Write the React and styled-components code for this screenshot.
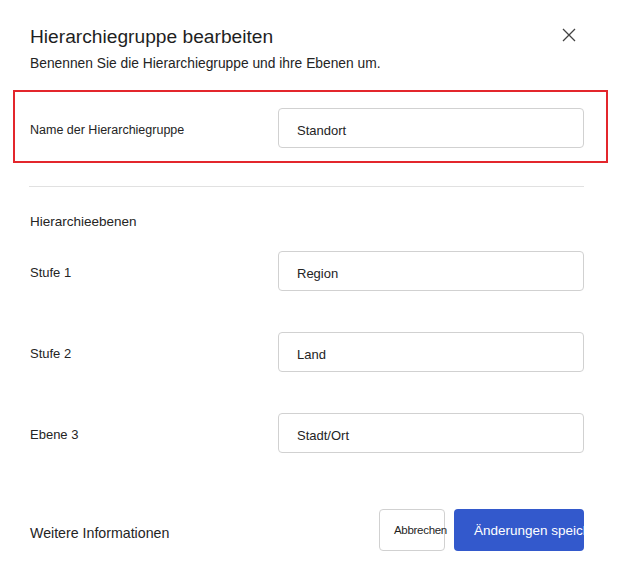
import React from "react";
import styled, { createGlobalStyle } from "styled-components";

const GlobalStyle = createGlobalStyle`
  body {
    margin: 0;
    background: #ffffff;
    font-family: "Liberation Sans", Arial, sans-serif;
    color: #242424;
  }
`;

const levels = [
  { label: "Stufe 1", value: "Region" },
  { label: "Stufe 2", value: "Land" },
  { label: "Ebene 3", value: "Stadt/Ort" },
];

const App = () => {
  return (
    <>
      <GlobalStyle />
      <Dialog>
        <Header>
          <Title>Hierarchiegruppe bearbeiten</Title>
          <CloseButton aria-label="Schließen">
            <svg width="14" height="14" viewBox="0 0 14 14">
              <path d="M1 1L13 13M13 1L1 13" stroke="#424242" strokeWidth="1.3" fill="none" />
            </svg>
          </CloseButton>
        </Header>
        <Subtitle>Benennen Sie die Hierarchiegruppe und ihre Ebenen um.</Subtitle>

        <Highlight>
          <FieldRow>
            <Label $size="12.5px">Name der Hierarchiegruppe</Label>
            <TextField defaultValue="Standort" />
          </FieldRow>
        </Highlight>

        <Divider />

        <SectionLabel>Hierarchieebenen</SectionLabel>

        <Levels>
          {levels.map((level) => (
            <FieldRow key={level.label}>
              <Label>{level.label}</Label>
              <TextField defaultValue={level.value} />
            </FieldRow>
          ))}
        </Levels>

        <Footer>
          <MoreInfo>Weitere Informationen</MoreInfo>
          <Actions>
            <SecondaryButton>Abbrechen</SecondaryButton>
            <PrimaryButton>Änderungen speichern</PrimaryButton>
          </Actions>
        </Footer>
      </Dialog>
    </>
  );
};

const Dialog = styled.div`
  width: 622px;
  height: 587px;
  box-sizing: border-box;
  padding: 25px 38px 0 30px;
  display: flex;
  flex-direction: column;
`;

const Header = styled.div`
  display: flex;
  justify-content: space-between;
  align-items: flex-start;
`;

const Title = styled.h1`
  margin: 0;
  font-size: 19.2px;
  line-height: 24px;
  font-weight: 400;
  color: #1f1f1f;
`;

const CloseButton = styled.button`
  border: none;
  background: none;
  padding: 0;
  margin: 3px 8px 0 0;
  width: 14px;
  height: 14px;
  display: flex;
  cursor: pointer;
`;

const Subtitle = styled.p`
  margin: 5px 0 0;
  font-size: 13.8px;
  line-height: 20px;
  color: #242424;
`;

const Highlight = styled.div`
  margin: 16px -24px 0 -17px;
  padding: 16px 22px 13px 15px;
  border: 2px solid #e3262c;
`;

const FieldRow = styled.div`
  display: grid;
  grid-template-columns: 248px 1fr;
  align-items: center;
`;

const Label = styled.span`
  padding-top: 3px;
  font-size: ${(p) => p.$size || "13px"};
  line-height: 18px;
  color: #242424;
`;

const TextField = styled.input`
  height: 40px;
  box-sizing: border-box;
  border: 1px solid #d1d1d1;
  border-radius: 4px;
  padding: 4px 18px 0;
  font-family: "Liberation Sans", Arial, sans-serif;
  font-size: 13px;
  color: #242424;
  outline: none;
`;

const Divider = styled.hr`
  margin: 23px 0 0 -1px;
  border: none;
  border-top: 1px solid #e1e1e1;
`;

const SectionLabel = styled.div`
  margin-top: 25px;
  margin-bottom: -2px;
  font-size: 13.5px;
  line-height: 20px;
`;

const Levels = styled.div`
  margin-top: 21px;
  display: flex;
  flex-direction: column;
  gap: 41px;
`;

const Footer = styled.div`
  margin-top: 56px;
  display: flex;
  justify-content: space-between;
  align-items: center;
`;

const MoreInfo = styled.span`
  padding-top: 6px;
  font-size: 14.2px;
  color: #242424;
`;

const Actions = styled.div`
  display: flex;
  gap: 9px;
`;

const SecondaryButton = styled.button`
  width: 66px;
  height: 42px;
  box-sizing: border-box;
  padding: 0 0 0 14px;
  display: flex;
  align-items: center;
  border: 1px solid #d1d1d1;
  border-radius: 4px;
  background: #ffffff;
  white-space: nowrap;
  overflow: visible;
  font-family: "Liberation Sans", Arial, sans-serif;
  font-size: 11.5px;
  letter-spacing: -0.3px;
  color: #1f1f1f;
  cursor: pointer;
`;

const PrimaryButton = styled.button`
  width: 130px;
  height: 42px;
  box-sizing: border-box;
  padding: 0 0 0 20px;
  display: flex;
  align-items: center;
  border: none;
  border-radius: 4px;
  background: #3359cc;
  color: #ffffff;
  white-space: nowrap;
  overflow: hidden;
  font-family: "Liberation Sans", Arial, sans-serif;
  font-size: 13.5px;
  cursor: pointer;
`;

export default App;
